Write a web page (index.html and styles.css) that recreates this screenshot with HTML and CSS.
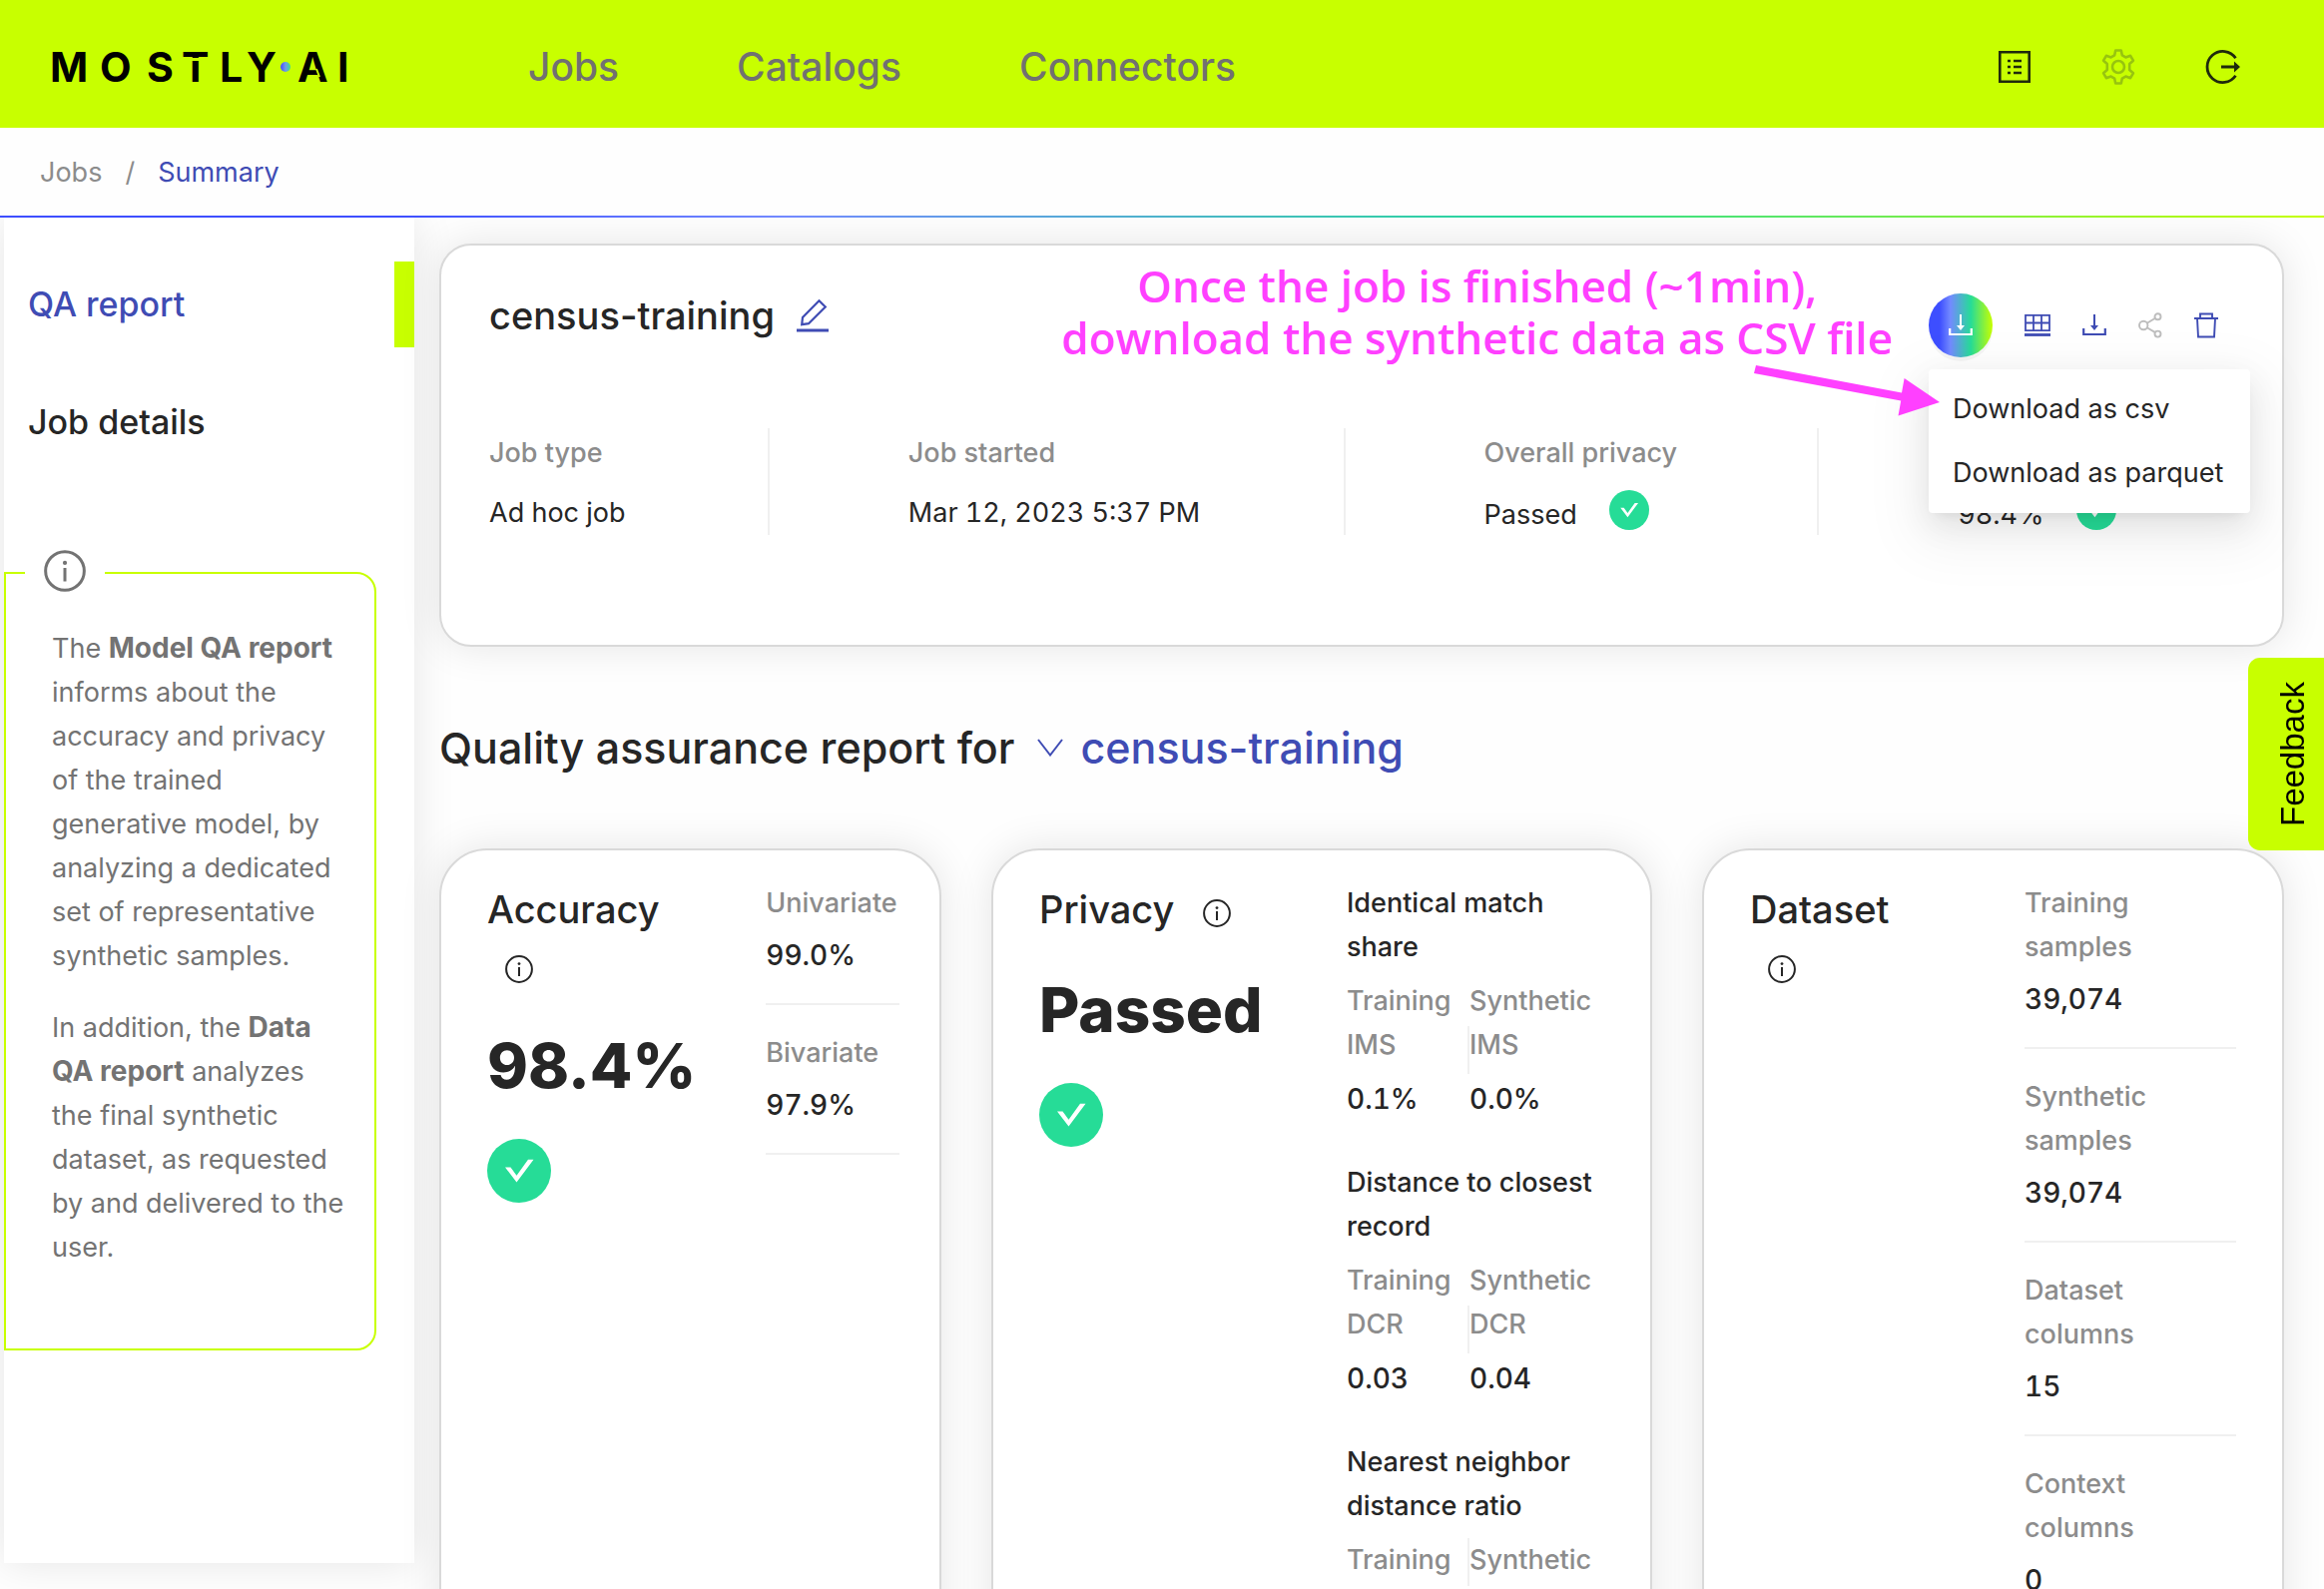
FILE: index.html
```html
<!DOCTYPE html>
<html lang="en">
<head>
<meta charset="utf-8">
<title>census-training - MOSTLY AI</title>
<link rel="stylesheet" href="styles.css">
</head>
<body>
<svg class="sprite" aria-hidden="true">
  <symbol id="info" viewBox="0 0 28 28"><circle cx="14" cy="14" r="12.9" fill="none" stroke="currentColor" stroke-width="2"/><circle cx="14" cy="8.6" r="1.4" fill="currentColor"/><path d="M14 12v9" stroke="currentColor" stroke-width="2"/></symbol>
  <symbol id="check" viewBox="0 0 64 64"><circle cx="32" cy="32" r="32" fill="#26dc97"/><path d="M18 28.500h5.500l6 8.200 11.500-16h5.500L29.500 43.500z" fill="#fff"/></symbol>
  <symbol id="download" viewBox="0 0 24 24"><path d="M1.2 15v6h21.6v-6" fill="none" stroke="currentColor" stroke-width="2.2"/><path d="M11 1h2v11h3l-4 5-4-5h3z" fill="currentColor"/></symbol>
</svg>
<header class="topbar">
  <a class="logo" href="#" aria-label="MOSTLY AI">
    <svg width="304" height="34" viewBox="0 0 304 34">
      <defs><linearGradient id="dot"><stop offset=".1" stop-color="#4a55ff"/><stop offset=".5" stop-color="#6f9bea"/><stop offset="1" stop-color="#3be08c"/></linearGradient></defs>
      <text class="logo-text" y="32" x="1 51 98 133 171 198">MOSTLY</text>
      <text class="logo-text" y="32" x="249 289">AI</text>
      <path d="M132 9.500h30" stroke="#c8ff00" stroke-width="3"/>
      <path d="M268 19l3 8" stroke="#c8ff00" stroke-width="2"/>
      <circle cx="237" cy="17" r="5" fill="url(#dot)"/>
    </svg>
  </a>
  <nav class="topnav">
    <a href="#">Jobs</a><a href="#">Catalogs</a><a href="#">Connectors</a>
  </nav>
  <div class="tools">
    <button type="button" aria-label="Activity"><svg width="36" height="36" viewBox="0 0 36 36"><path d="M3.300 3.300h29.400v29.400H3.300z" fill="none" stroke="#1f2a0c" stroke-width="2.600"/><path d="M17 12h8M17 18h8M17 24h8M11 12h3M11 18h3M11 24h3" stroke="#1f2a0c" stroke-width="2.400"/></svg></button>
    <button type="button" aria-label="Settings" disabled><svg width="36" height="36" viewBox="0 0 36 36" fill="none" stroke="#97c40f" stroke-width="2.600" stroke-linejoin="round"><path d="M15.200 1.500h5.600l1 4.800 3.600 2.100 4.700-1.600 2.800 4.900-3.700 3.200v6.200l3.700 3.200-2.800 4.900-4.700-1.600-3.600 2.100-1 4.800h-5.600l-1-4.800-3.600-2.100-4.700 1.600-2.800-4.900 3.700-3.200v-6.200l-3.700-3.200 2.800-4.900 4.700 1.600 3.600-2.100z"/><circle cx="18" cy="18" r="6"/></svg></button>
    <button type="button" aria-label="Log out"><svg width="36" height="36" viewBox="0 0 36 36"><path d="M31.500 9.200a15.600 15.600 0 1 0 0 17.600" fill="none" stroke="#1f2a0c" stroke-width="2.800"/><path d="M17 16.600h13v-4l6 5.400-6 5.400v-4H17z" fill="#1f2a0c"/></svg></button>
  </div>
</header>
<nav class="crumbs" aria-label="Breadcrumb">
  <a href="#">Jobs</a><span>/</span><a class="current" href="#">Summary</a>
</nav>
<div class="layout">
  <aside class="sidebar">
    <nav class="sidenav">
      <a class="active" href="#">QA report</a>
      <a href="#">Job details</a>
    </nav>
    <div class="note">
      <span class="note-icon"><svg width="42" height="42"><use href="#info"/></svg></span>
      <p>The <b>Model QA report</b> informs about the accuracy and privacy of the trained generative model, by analyzing a dedicated set of representative synthetic samples.</p>
      <p>In addition, the <b>Data QA report</b> analyzes the final synthetic dataset, as requested by and delivered to the user.</p>
    </div>
  </aside>
  <main class="content">
    <section class="card job">
      <div class="job-head">
        <div class="job-title">
          <h1>census-training</h1>
          <button type="button" aria-label="Rename"><svg width="32" height="34" viewBox="0 0 32 34"><path d="M0 32h32" stroke="#3f4cb4" stroke-width="3"/><path d="M22.500 2.200l6.300 6.300L12 25.200l-6.800 1 .8-7.300z" fill="none" stroke="#3f4cb4" stroke-width="2.200"/></svg></button>
        </div>
        <div class="actions">
          <div class="download">
            <button class="round" type="button" aria-label="Download data" aria-expanded="true"><svg width="24" height="24"><use href="#download"/></svg></button>
            <div class="menu">
              <button type="button">Download as csv</button>
              <button type="button">Download as parquet</button>
            </div>
          </div>
          <button type="button" aria-label="Table"><svg width="26" height="26" viewBox="0 0 26 26" fill="none" stroke="#3f4cb4"><path d="M1 2.900h24v15.200H1zM1 10.500h24M9 2.900v15.200M17 2.900v15.200" stroke-width="1.800"/><path d="M0 22.500h26" stroke-width="2.800"/></svg></button>
          <button type="button" aria-label="Download report"><svg width="24" height="24"><use href="#download"/></svg></button>
          <button type="button" aria-label="Share" disabled><svg width="24" height="26" viewBox="0 0 24 26" fill="none" stroke="#bdbdbd" stroke-width="1.900"><circle cx="5.200" cy="13" r="4.200"/><circle cx="19.500" cy="4.200" r="3"/><circle cx="19.500" cy="21.600" r="3"/><path d="M8.800 10.800l8.200-5M8.800 15.200l8.200 4.900"/></svg></button>
          <button type="button" aria-label="Delete"><svg width="24" height="26" viewBox="0 0 24 26" fill="none" stroke="#3f4cb4" stroke-width="1.900"><path d="M0 6h24M6 6V1.500h12V6M3 6l1 18.500h16L21 6"/></svg></button>
        </div>
      </div>
      <dl class="facts">
        <div><dt>Job type</dt><dd>Ad hoc job</dd></div>
        <div><dt>Job started</dt><dd>Mar 12, 2023 5:37 PM</dd></div>
        <div><dt>Overall privacy</dt><dd class="status">Passed <svg width="40" height="40"><use href="#check"/></svg></dd></div>
        <div><dt>Overall accuracy</dt><dd class="status">98.4% <svg width="40" height="40"><use href="#check"/></svg></dd></div>
      </dl>
      <p class="callout">Once the job is finished (~1min),<br>download the synthetic data as CSV file</p>
      <svg class="arrow" width="186" height="54" viewBox="0 0 186 54" fill="#ff40ff"><path d="M2 3l146 27.600 2.600-14.600L186 40l-41.500 13.500 2.700-15L0 11z"/></svg>
    </section>
    <div class="report-head">
      <h2>Quality assurance report for</h2>
      <button type="button"><svg width="26" height="18" viewBox="0 0 26 18"><path d="M1 1l12 15.500L25 1" fill="none" stroke="#3f4cb4" stroke-width="2"/></svg>census-training</button>
    </div>
    <div class="cards">
      <section class="card metric accuracy">
        <div class="lead">
          <h3>Accuracy <svg width="28" height="28"><use href="#info"/></svg></h3>
          <strong>98.4%</strong>
          <svg class="ok" width="64" height="64"><use href="#check"/></svg>
        </div>
        <dl class="stats">
          <div><dt>Univariate</dt><dd>99.0%</dd></div>
          <div><dt>Bivariate</dt><dd>97.9%</dd></div>
        </dl>
      </section>
      <section class="card metric privacy">
        <div class="lead">
          <h3>Privacy <svg width="28" height="28"><use href="#info"/></svg></h3>
          <strong>Passed</strong>
          <svg class="ok" width="64" height="64"><use href="#check"/></svg>
        </div>
        <div class="tests">
          <section><h4>Identical match share</h4>
            <div class="pair"><dl><dt>Training IMS</dt><dd>0.1%</dd></dl><i></i><dl><dt>Synthetic IMS</dt><dd>0.0%</dd></dl></div></section>
          <section><h4>Distance to closest record</h4>
            <div class="pair"><dl><dt>Training DCR</dt><dd>0.03</dd></dl><i></i><dl><dt>Synthetic DCR</dt><dd>0.04</dd></dl></div></section>
          <section><h4>Nearest neighbor distance ratio</h4>
            <div class="pair"><dl><dt>Training</dt></dl><i></i><dl><dt>Synthetic</dt></dl></div></section>
        </div>
      </section>
      <section class="card metric dataset">
        <div class="lead">
          <h3>Dataset <svg width="28" height="28"><use href="#info"/></svg></h3>
        </div>
        <dl class="stats">
          <div><dt>Training samples</dt><dd>39,074</dd></div>
          <div><dt>Synthetic samples</dt><dd>39,074</dd></div>
          <div><dt>Dataset columns</dt><dd>15</dd></div>
          <div><dt>Context columns</dt><dd>0</dd></div>
        </dl>
      </section>
    </div>
  </main>
</div>
<button class="feedback" type="button">Feedback</button>
</body>
</html>
```
FILE: styles.css
```css
:root {
  --lime: #c8ff00;
  --blue: #3f4cb4;
  --ink: #262626;
  --muted: #8c8c8c;
  --line: #f0f0f0;
  --rainbow: linear-gradient(90deg, #3d4eff 17%, #738aff 34%, #26dc97 66%, #c8ff00 100%);
}
* { box-sizing: border-box; }
body {
  margin: 0;
  height: 100vh;
  overflow: hidden;
  display: flex;
  flex-direction: column;
  background: #fefefe;
  color: var(--ink);
  font: 27px/44px Inter, "Liberation Sans", sans-serif;
}
a { color: inherit; text-decoration: none; }
button { padding: 0; border: 0; background: none; color: inherit; font: inherit; cursor: pointer; }
svg { display: block; }
h1, h2, h3, h4, p, dl, dd { margin: 0; font-weight: 500; }
p { font-weight: 400; }
.sprite { position: absolute; width: 0; height: 0; }

.topbar {
  flex: none;
  height: 128px;
  padding: 6px 84px 0 49px;
  display: flex;
  align-items: center;
  background: var(--lime);
}
.logo-text { font: 700 41px Inter, sans-serif; fill: #000; }
.topnav { display: flex; gap: 118px; margin-left: 176px; font-size: 39px; font-weight: 500; color: #717171; }
.tools { display: flex; gap: 68px; margin-left: auto; }

.crumbs {
  flex: none;
  height: 90px;
  padding: 2px 40px 0;
  display: flex;
  align-items: center;
  gap: 23px;
  color: var(--muted);
  border-bottom: 2px solid;
  border-image: var(--rainbow) 1;
}
.crumbs .current { color: var(--blue); }

.layout { flex: 1; min-height: 0; display: flex; align-items: flex-start; gap: 25px; padding: 0 40px 0 4px; overflow: hidden; }
.sidebar {
  flex: none;
  width: 411px;
  padding: 44px 0 213px;
  background: #fff;
  box-shadow: 0 0 40px rgba(0, 0, 0, .1);
}
.sidenav { display: flex; flex-direction: column; gap: 32px; font-size: 34px; font-weight: 500; }
.sidenav a { padding: 21px 24px; }
.sidenav .active { color: var(--blue); border-right: 20px solid var(--lime); }
.note {
  position: relative;
  width: 373px;
  margin-top: 107px;
  padding: 53px 26px 79px 46px;
  border: 2px solid var(--lime);
  border-radius: 0 20px 20px 0;
  color: #737373;
}
.note p + p { margin-top: 28px; }
.note b { font-size: 28px; line-height: 40px; }
.note-icon { position: absolute; top: -24px; left: 19px; padding: 0 19px; background: #fff; }

.content { flex: 1; min-width: 0; padding-top: 26px; }
.card { background: #fff; border: 2px solid #d9d9d9; box-shadow: 0 0 40px rgba(0, 0, 0, .1); }
.job { position: relative; height: 404px; padding: 48px 48px 0; border-radius: 32px; }
.job-head { display: flex; justify-content: space-between; align-items: flex-start; }
.job-title { display: flex; align-items: center; gap: 22px; }
h1 { font-size: 38px; }
.actions { display: flex; align-items: center; gap: 32px; height: 64px; padding-right: 16px; }
.download { position: relative; }
.round {
  width: 64px;
  height: 64px;
  display: grid;
  place-items: center;
  border-radius: 50%;
  background: var(--rainbow);
  box-shadow: 0 4px 0 rgba(0, 0, 0, .04);
  color: #fff;
}
.actions > button { color: var(--blue); }
.menu {
  position: absolute;
  z-index: 2;
  top: 76px;
  left: 0;
  width: 322px;
  padding: 8px 0;
  border-radius: 4px;
  background: #fff;
  box-shadow: 0 12px 32px rgba(0, 0, 0, .08), 0 6px 12px -8px rgba(0, 0, 0, .12), 0 18px 56px 16px rgba(0, 0, 0, .05);
}
.menu button { display: block; width: 100%; padding: 10px 24px; text-align: left; white-space: nowrap; }

.facts { display: grid; grid-template-columns: 279fr 577fr 475fr 418fr; margin-top: 71px; }
.facts > div { height: 107px; padding-top: 3px; }
.facts > div + div { padding-left: 139px; border-left: 2px solid var(--line); }
.facts dt { color: var(--muted); }
.facts dd { display: flex; align-items: center; gap: 32px; height: 44px; margin-top: 16px; font-weight: 400; }
.facts .status { padding-top: 4px; }
.facts .status svg { margin-bottom: 10px; }
dd { font-variant-numeric: tabular-nums; }

.callout {
  position: absolute;
  z-index: 3;
  top: 14px;
  right: 390px;
  color: #ff40ff;
  text-align: center;
  white-space: nowrap;
  font: 600 44px/52px "Open Sans", sans-serif;
}
.arrow { position: absolute; z-index: 3; top: 117px; right: 343px; }

.report-head { display: flex; align-items: center; gap: 23px; margin: 73px 0; font-size: 43px; line-height: 56px; }
h2 { font-size: 43px; }
.report-head button { display: flex; align-items: center; gap: 17px; color: var(--blue); font-weight: 500; }

.cards { display: grid; grid-template-columns: 503fr 662fr 583fr; gap: 50px; }
.metric { display: grid; min-height: 800px; padding: 31px 46px; border-radius: 48px; }
.accuracy { grid-template-columns: 280fr 134fr; padding-right: 40px; }
.privacy { grid-template-columns: 308fr 258fr; }
.dataset { grid-template-columns: 275fr 212fr; }
.lead { padding-right: 70px; }
h3 { font-size: 38px; line-height: 56px; }
h3 svg { display: inline-block; margin: 0 18px; vertical-align: -4px; }
.lead strong { display: block; margin-top: 28px; font-size: 62px; font-weight: 800; line-height: 90px; }
.ok { margin-top: 28px; }
.stats, .tests { font-weight: 500; }
.stats dt, .pair dt { color: var(--muted); }
.stats > div { padding-bottom: 26px; margin-bottom: 26px; border-bottom: 2px solid var(--line); }
.stats dd { margin-top: 8px; }
.stats dd, .pair dd { font-size: 28px; }
.accuracy dt { white-space: nowrap; }
.dataset dt { max-width: 140px; }
.tests section { margin-bottom: 40px; }
h4 { font-size: 27px; }
.pair { display: grid; grid-template-columns: 121px 2px 1fr; margin-top: 10px; }
.pair i { align-self: center; height: 48px; background: var(--line); }
.pair dd { margin-top: 10px; }

.feedback {
  position: fixed;
  right: 0;
  top: 659px;
  width: 76px;
  height: 193px;
  padding-right: 14px;
  border-radius: 0 12px 12px 0;
  background: var(--lime);
  color: #000;
  font: 33px/60px "Liberation Sans", Arial, sans-serif;
  writing-mode: vertical-rl;
  text-align: center;
  transform: rotate(180deg);
}
```
